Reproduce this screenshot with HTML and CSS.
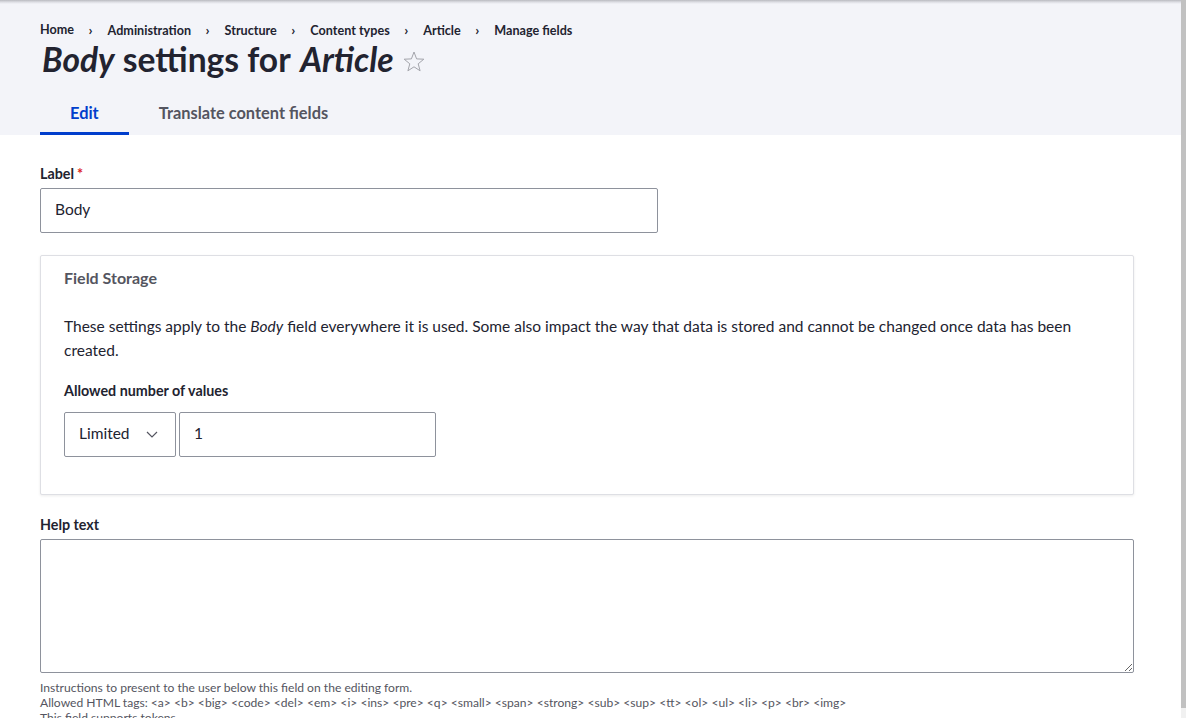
FILE: index.html
```html
<!DOCTYPE html>
<html lang="en">
<head>
<meta charset="utf-8">
<title>Body settings for Article</title>
<link rel="stylesheet" href="styles.css">
</head>
<body>
<header class="page-header">
  <nav class="breadcrumb">
    <ol>
      <li>Home</li>
      <li>Administration</li>
      <li>Structure</li>
      <li>Content types</li>
      <li>Article</li>
      <li>Manage fields</li>
    </ol>
  </nav>
  <div class="title-row">
    <h1 class="page-title"><em>Body</em> settings for <em>Article</em></h1>
    <svg class="star" width="22" height="21" viewBox="0 0 22 21" aria-hidden="true">
      <polygon points="11,1 13.6,7.9 20.8,8.2 15.2,12.8 17.1,19.8 11,15.8 4.9,19.8 6.8,12.8 1.2,8.2 8.4,7.9" fill="none" stroke="#a3a4ab" stroke-width="1" stroke-linejoin="miter"/>
    </svg>
  </div>
  <nav class="tabs">
    <a class="tab tab--active">Edit</a>
    <a class="tab">Translate content fields</a>
  </nav>
</header>

<main class="page-content">
  <div class="form-item">
    <label class="form-label">Label<span class="required">*</span></label>
    <input class="form-text form-text--label" type="text" value="Body">
  </div>

  <section class="card">
    <h2 class="card-title">Field Storage</h2>
    <p class="card-text">These settings apply to the <em>Body</em> field everywhere it is used. Some also impact the way that data is stored and cannot be changed once data has been created.</p>
    <label class="form-label form-label--inner">Allowed number of values</label>
    <div class="cardinality">
      <div class="select">
        <span>Limited</span>
        <svg class="chevron" width="12" height="7" viewBox="0 0 12 7" aria-hidden="true"><path d="M1 1l5 5 5-5" fill="none" stroke="#545560" stroke-width="1.2"/></svg>
      </div>
      <input class="form-text form-text--number" type="text" value="1">
    </div>
  </section>

  <div class="form-item form-item--help">
    <label class="form-label">Help text</label>
    <textarea class="form-textarea"></textarea>
    <div class="description">
      <div>Instructions to present to the user below this field on the editing form.</div>
      <div>Allowed HTML tags: &lt;a&gt; &lt;b&gt; &lt;big&gt; &lt;code&gt; &lt;del&gt; &lt;em&gt; &lt;i&gt; &lt;ins&gt; &lt;pre&gt; &lt;q&gt; &lt;small&gt; &lt;span&gt; &lt;strong&gt; &lt;sub&gt; &lt;sup&gt; &lt;tt&gt; &lt;ol&gt; &lt;ul&gt; &lt;li&gt; &lt;p&gt; &lt;br&gt; &lt;img&gt;</div>
      <div>This field supports tokens.</div>
    </div>
  </div>
</main>

<div class="scrollbar"><div class="scrollbar-thumb"></div></div>
</body>
</html>
```
FILE: styles.css
```css
html, body {
  margin: 0;
  padding: 0;
}
body {
  font-family: "Lato", "Open Sans", sans-serif;
  color: #222330;
  background: #fff;
  overflow: hidden;
  height: 718px;
}

.page-header {
  background: linear-gradient(to bottom, #b9bac0 0, #dcdde3 2px, #f3f4f9 4px);
  padding: 22px 52px 0 40px;
  height: 135px;
  box-sizing: border-box;
}

.breadcrumb ol {
  list-style: none;
  margin: 0;
  padding: 0;
  display: flex;
  font-size: 12.6px;
  font-weight: 700;
  line-height: 16px;
  color: #222330;
}
.breadcrumb li + li::before {
  content: "\203A";
  display: inline-block;
  margin: 0 15px 0 14.5px;
  font-size: 14px;
  font-weight: 700;
}

.title-row {
  display: flex;
  align-items: center;
  gap: 9px;
  height: 42px;
  margin-top: -1px;
}
.page-title {
  margin: 0;
  font-size: 33.6px;
  font-weight: 700;
  line-height: 42px;
  color: #222330;
}
.page-title em {
  font-style: italic;
  padding-left: 2px;
}
.star {
  display: block;
  margin-top: 4px;
}

.tabs {
  display: flex;
  margin-top: 13px;
}
.tab {
  display: flex;
  align-items: center;
  height: 42px;
  box-sizing: border-box;
  padding: 0 30px;
  border-bottom: 3px solid transparent;
  font-size: 16.4px;
  font-weight: 700;
  color: #545560;
}
.tab--active {
  color: #003ecc;
  border-bottom-color: #003ecc;
}

.page-content {
  padding: 30px 52px 0 40px;
}

.form-label {
  display: block;
  font-size: 14.3px;
  font-weight: 700;
  line-height: 18px;
  margin-bottom: 5px;
  color: #222330;
}
.required {
  color: #dc2323;
  margin-left: 3px;
}

.form-text {
  box-sizing: border-box;
  height: 45px;
  border: 1px solid #8e929c;
  border-radius: 2px;
  padding: 0 14px 3px;
  font-family: inherit;
  font-size: 15.5px;
  color: #222330;
  background: #fff;
  outline: none;
}
.form-text--label {
  width: 618px;
}

.card {
  margin-top: 22px;
  border: 1px solid #dedfe4;
  border-radius: 2px;
  box-shadow: 0 1px 3px rgba(0, 0, 0, 0.08);
  padding: 13px 23px 37px;
  background: #fff;
}
.card-title {
  margin: 0;
  font-size: 16px;
  font-weight: 700;
  line-height: 18px;
  color: #545560;
}
.card-text {
  margin: 27px 0 0;
  font-size: 15.5px;
  line-height: 24px;
  color: #222330;
}
.form-label--inner {
  margin-top: 20px;
  margin-bottom: 12px;
}
.cardinality {
  display: flex;
  gap: 3px;
}
.select {
  box-sizing: border-box;
  width: 112px;
  height: 45px;
  border: 1px solid #8e929c;
  border-radius: 2px;
  display: flex;
  align-items: center;
  justify-content: space-between;
  padding: 0 17px 3px 14px;
  font-size: 15.5px;
}
.chevron {
  display: block;
  margin-top: 3px;
}
.form-text--number {
  width: 257px;
}

.form-item--help {
  margin-top: 21px;
}
.form-textarea {
  display: block;
  box-sizing: border-box;
  width: 100%;
  height: 134px;
  border: 1px solid #8e929c;
  border-radius: 2px;
  margin: 0;
  font-family: inherit;
  outline: none;
}
.description {
  margin-top: 7px;
  font-size: 12.1px;
  line-height: 15px;
  color: #545560;
}

.scrollbar {
  position: fixed;
  top: 0;
  right: 0;
  width: 5px;
  height: 718px;
  background: #f1f1f1;
}
.scrollbar-thumb {
  height: 708px;
  background: #c1c1c1;
}
```
